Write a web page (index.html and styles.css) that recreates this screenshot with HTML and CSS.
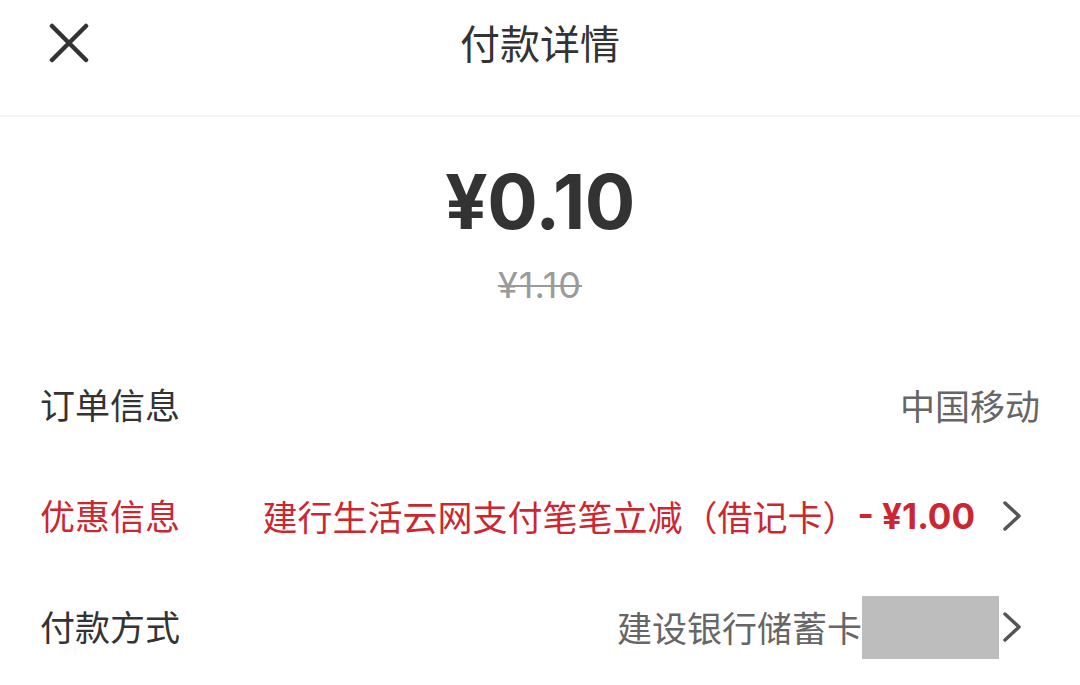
FILE: index.html
```html
<!DOCTYPE html>
<html lang="zh-CN">
<head>
<meta charset="utf-8">
<title>付款详情</title>
<link rel="stylesheet" href="styles.css">
</head>
<body>
<div class="page">
  <header class="header">
    <div class="close">
      <svg viewBox="0 0 40 40" width="40" height="40">
        <path d="M3 3 L37 37 M37 3 L3 37" stroke="#333" stroke-width="4.5" stroke-linecap="round" fill="none"/>
      </svg>
    </div>
    <div class="title">付款详情</div>
    <div></div>
  </header>
  <section class="amount">
    <div class="price">¥0.10</div>
    <div class="origin">¥1.10</div>
  </section>
  <div class="row">
    <div class="label">订单信息</div>
    <div class="value">中国移动</div>
  </div>
  <div class="row red">
    <div class="label">优惠信息</div>
    <div class="value">建行生活云网支付笔笔立减（借记卡）<b>- ¥1.00</b><svg class="chev chev-wide" viewBox="0 0 20 30" width="20" height="30"><path d="M3 2 L17 15 L3 28" stroke="#555" stroke-width="3.5" fill="none" stroke-linecap="round" stroke-linejoin="round"/></svg></div>
  </div>
  <div class="row">
    <div class="label">付款方式</div>
    <div class="value">建设银行储蓄卡<span class="mask"></span><svg class="chev" viewBox="0 0 20 30" width="20" height="30"><path d="M3 2 L17 15 L3 28" stroke="#555" stroke-width="3.5" fill="none" stroke-linecap="round" stroke-linejoin="round"/></svg></div>
  </div>
</div>
</body>
</html>
```
FILE: styles.css
```css
html, body {
  margin: 0;
  padding: 0;
  background: #fff;
}
body {
  font-family: "Noto Sans CJK SC", "Noto Sans", sans-serif;
  color: #333;
}
.page {
  width: 1080px;
  height: 685px;
  overflow: hidden;
}
.header {
  height: 115px;
  border-bottom: 2px solid #f3f3f3;
  display: grid;
  grid-template-columns: 1fr auto 1fr;
  align-items: start;
}
.close {
  padding-left: 49px;
  padding-top: 23px;
  height: 40px;
}
.close svg { display: block; }
.title {
  font-size: 40px;
  line-height: 50px;
  padding-top: 17px;
  color: #333;
}
.amount {
  height: 232px;
  display: flex;
  flex-direction: column;
  align-items: center;
}
.price {
  margin-top: 40px;
  font-family: "Inter", "Noto Sans", sans-serif;
  font-weight: 700;
  font-size: 75px;
  line-height: 90px;
  color: #333;
  letter-spacing: -0.5px;
}
.origin {
  margin-top: 18px;
  font-family: "Inter", "Noto Sans", sans-serif;
  font-size: 36px;
  line-height: 40px;
  color: #9a9a9a;
  text-decoration: line-through;
  text-decoration-thickness: 2px;
  letter-spacing: 1px;
}
.row {
  height: 111px;
  display: flex;
  align-items: center;
  justify-content: space-between;
  padding: 0 40px;
}
.row:first-of-type {
  margin-top: 0;
}
.label {
  font-size: 35px;
  color: #333;
  position: relative;
  top: -1px;
}
.value {
  font-size: 35px;
  color: #666;
  display: flex;
  align-items: center;
}
.red .label, .red .value {
  color: #cc2730;
}
.value b {
  font-family: "Inter", "Noto Sans", sans-serif;
  font-weight: 700;
  white-space: pre;
}
.chev {
  margin-left: 3px;
  margin-right: 18px;
}
.chev-wide {
  margin-left: 27px;
}
.mask {
  display: inline-block;
  width: 137px;
  height: 63px;
  background: #bdbdbd;
  position: relative;
  top: 1px;
}
```
